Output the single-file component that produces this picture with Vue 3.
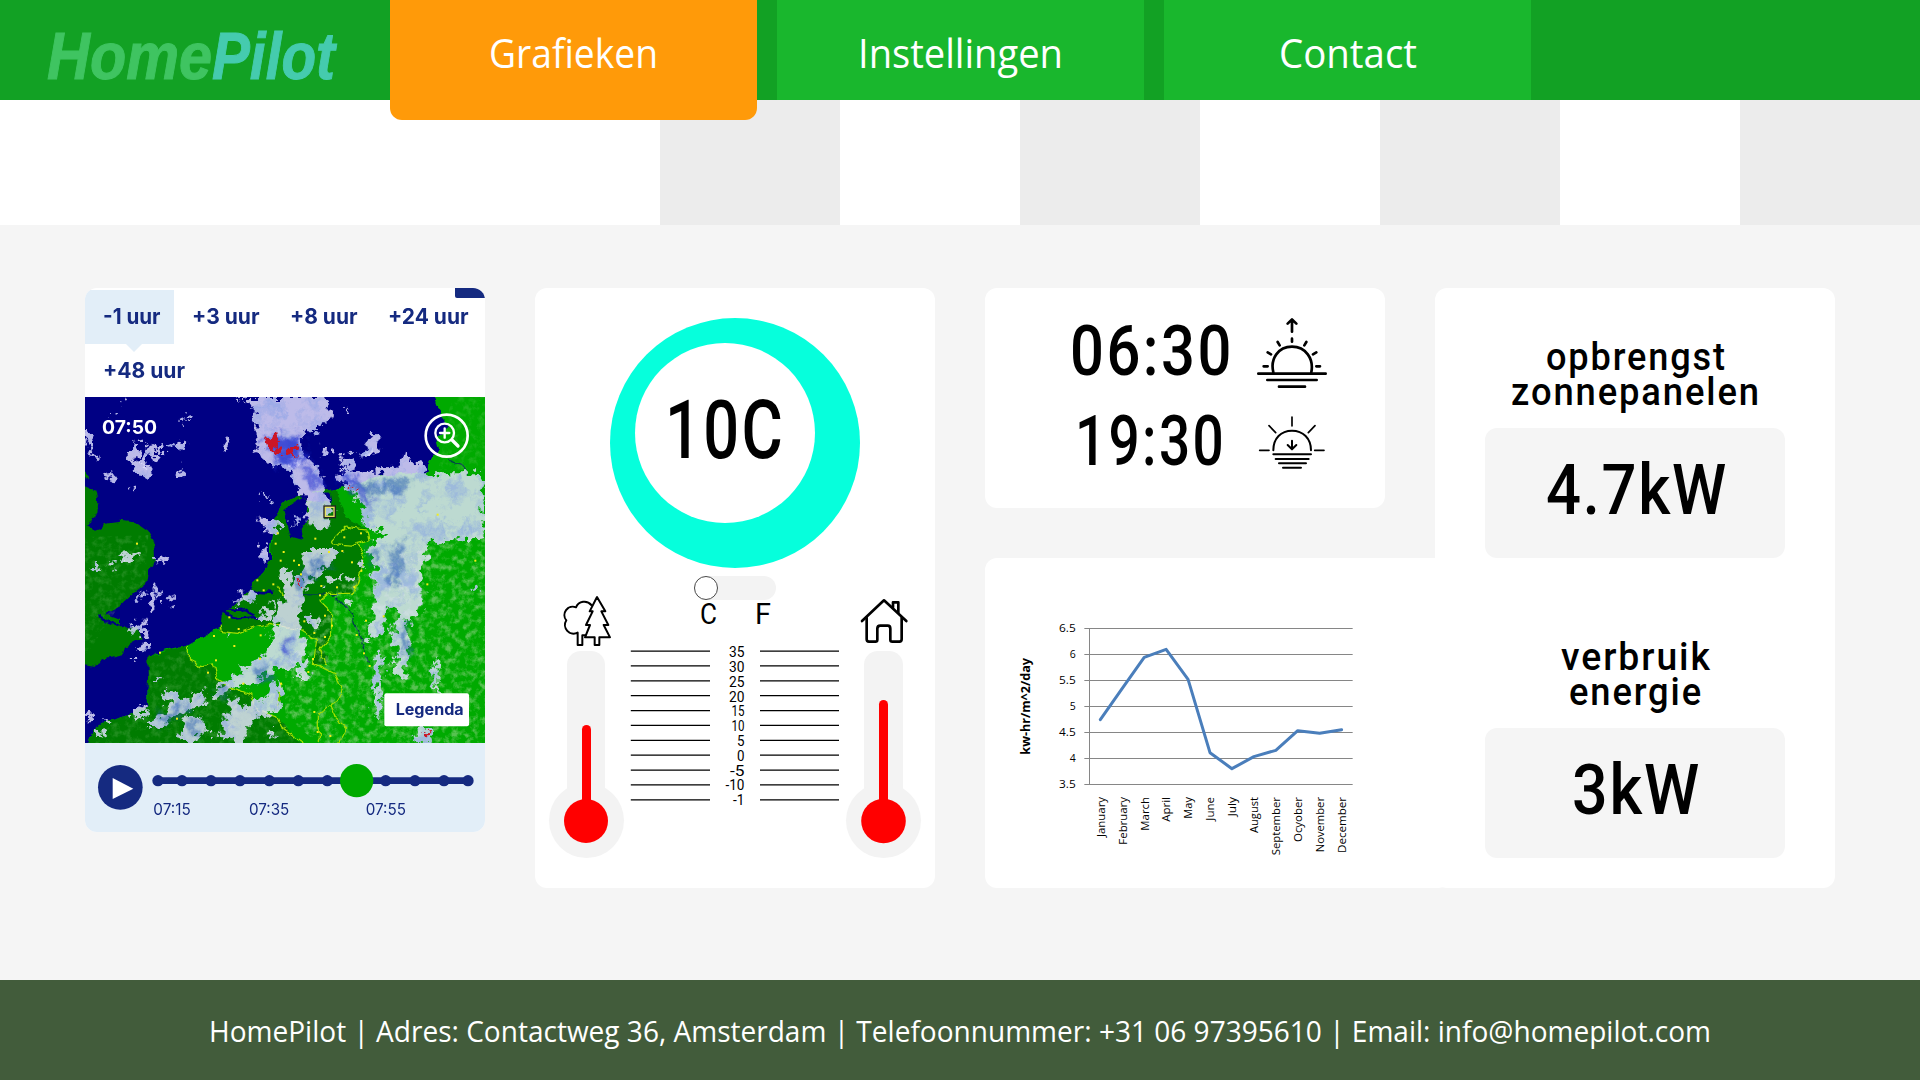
<script setup>
import { h } from 'vue'

// Single line of text drawn at an exact width
const FitText = (p) =>
  h('svg', { class: 'fit', width: p.w, height: p.h, viewBox: `0 0 ${p.w} ${p.h}` }, [
    h('text', { x: 0, y: p.base, 'font-size': p.size, textLength: p.w, lengthAdjust: 'spacingAndGlyphs' }, p.text),
  ])
FitText.props = ['text', 'w', 'h', 'base', 'size']

const tabs = [
  { text: 'Grafieken', w: 169, base: 68.2, active: true },
  { text: 'Instellingen', w: 205, base: 67.6 },
  { text: 'Contact', w: 138, base: 68.2 },
]

const ranges = [
  { text: '-1 uur', w: 57.5, cell: 89, active: true },
  { text: '+3 uur', w: 67.5, cell: 98 },
  { text: '+8 uur', w: 67.5, cell: 98 },
  { text: '+24 uur', w: 80.5, cell: 114 },
  { text: '+48 uur', w: 82, cell: 120 },
]

const energy = [
  { title: [{ t: 'opbrengst', w: 181 }, { t: 'zonnepanelen', w: 250 }], value: '4.7kW', w: 182 },
  { title: [{ t: 'verbruik', w: 151 }, { t: 'energie', w: 134 }], value: '3kW', w: 129 },
]

const scale = [
  ['35', 15.5], ['30', 15.5], ['25', 15.5], ['20', 15.5], ['15', 13], ['10', 13],
  ['5', 7.5], ['0', 7.5], ['-5', 14.5], ['-10', 19], ['-1', 11.5],
]

const months = [
  ['January', 120, 509], ['February', 143, 415], ['March', 101, 322], ['April', 74, 298],
  ['May', 65, 388], ['June', 71, 608], ['July', 58, 656], ['August', 108, 620],
  ['September', 175, 601], ['Ocyober', 135, 542], ['November', 166, 550], ['December', 168, 539],
]
const monthX = (i) => 361 + i * 65.8
const linePoints = months.map((m, i) => `${monthX(i)},${m[2]}`).join(' ')
const yLabels = [['6.5', 50], ['6', 18], ['5.5', 50], ['5', 18], ['4.5', 50], ['4', 18], ['3.5', 50]]

const stops = [264, 336, 423, 510, 598, 685, 772, 947, 1035, 1122, 1194]
const times = [['07:15', 250, 112], ['07:35', 537, 121], ['07:55', 887, 121]]

const showers = [
  [165, 215, 38, 20, 30], [148, 160, 14, 32, 20], [198, 162, 18, 22, 0], [178, 190, 12, 14, 20], [75, 238, 20, 8, 35],
  [228, 160, 8, 18, -20], [285, 145, 16, 14, -30], [262, 138, 5, 12, 40], [300, 60, 12, 6, -30], [292, 84, 4, 7, 20],
  [422, 140, 10, 24, 30], [286, 228, 12, 14, 20], [84, 54, 9, 7, 0], [10, 130, 10, 34, -15], [26, 172, 8, 8, 0],
  [144, 274, 7, 4, 20], [118, 4, 9, 5, 0], [775, 38, 9, 4, 30], [724, 164, 11, 14, 0], [785, 198, 24, 22, 20],
  [862, 150, 18, 42, 25], [840, 170, 24, 10, 20], [540, 300, 8, 5, 20], [560, 310, 6, 6, 0], [555, 382, 34, 20, 20],
  [535, 470, 14, 28, 0], [632, 366, 6, 9, 0], [135, 474, 18, 12, 0], [75, 505, 14, 7, 0], [30, 515, 16, 8, 0],
  [112, 482, 14, 6, 0], [235, 488, 10, 9, 20], [210, 484, 7, 9, 0], [205, 620, 10, 24, 5], [210, 590, 18, 10, 0],
  [258, 605, 12, 14, 0], [165, 595, 10, 7, 0], [160, 690, 28, 12, -30], [180, 705, 10, 16, 0], [178, 748, 18, 14, -20],
  [145, 792, 6, 6, 0], [12, 958, 18, 9, 0], [42, 1010, 14, 10, 0], [70, 976, 12, 5, 0], [165, 945, 34, 12, -30],
  [218, 842, 8, 4, -20], [685, 668, 20, 14, 40], [795, 616, 9, 8, 0], [825, 500, 12, 10, 0], [745, 548, 28, 8, -25],
  [800, 545, 10, 8, 0], [490, 598, 22, 16, 10], [465, 612, 20, 5, -10], [545, 655, 26, 12, 0], [562, 620, 6, 22, 0],
  [435, 715, 8, 6, -20], [360, 925, 10, 7, -30], [385, 1012, 8, 8, 0], [560, 1016, 12, 6, 30], [1052, 840, 8, 56, -3],
  [1015, 1015, 26, 26, 0], [1170, 577, 8, 8, 0],
]

const towns = [
  [156, 440], [578, 409], [572, 440], [596, 465], [691, 425], [778, 421], [828, 409], [732, 465], [772, 462], [801, 496],
  [829, 521], [648, 532], [565, 562], [536, 580], [517, 550], [587, 491], [627, 491], [705, 595], [709, 567], [756, 571],
  [808, 570], [720, 656], [658, 673], [741, 686], [688, 708], [720, 720], [433, 661], [461, 696], [387, 717], [448, 747],
  [527, 715], [525, 785], [393, 790], [369, 827], [225, 767], [475, 860], [276, 965], [670, 825], [684, 786], [588, 860],
  [843, 671], [815, 714], [896, 658], [837, 769], [854, 807], [1027, 562], [1171, 491], [688, 945], [698, 1005], [736, 1017],
  [1058, 353], [642, 504],
]
</script>

<template>
  <div class="page">
    <header class="topbar">
      <div class="logo">
        <svg width="300" height="100" viewBox="0 0 300 100">
          <text x="47" y="79" font-size="67" textLength="165" lengthAdjust="spacingAndGlyphs" fill="#3fc461" stroke="#3fc461">Home</text>
          <text x="212" y="79" font-size="67" textLength="123" lengthAdjust="spacingAndGlyphs" fill="#45cbae" stroke="#45cbae">Pilot</text>
        </svg>
      </div>
      <nav class="nav">
        <a v-for="t in tabs" :key="t.text" class="nav-tab" :class="{ active: t.active }">
          <FitText :text="t.text" :w="t.w" :h="100" :base="t.base" :size="39.5" />
        </a>
      </nav>
    </header>

    <div class="strip">
      <i v-for="n in 4" :key="n" class="block"></i>
    </div>

    <main class="board">
      <section class="card radar">
        <div class="ranges">
          <div v-for="r in ranges" :key="r.text" class="range" :class="{ on: r.active }" :style="{ width: r.cell + 'px' }">
            <FitText :text="r.text" :w="r.w" :h="53" :base="34.1" :size="21.5" />
          </div>
          <span class="corner"></span>
        </div>

        <svg class="map" width="400" height="346" viewBox="0 0 1200 1038" preserveAspectRatio="none">
          <defs>
            <filter id="coast" x="-5%" y="-5%" width="110%" height="110%">
              <feTurbulence type="fractalNoise" baseFrequency="0.03" numOctaves="3" seed="4" />
              <feDisplacementMap in="SourceGraphic" scale="22" xChannelSelector="R" yChannelSelector="G" />
            </filter>
            <filter id="ragged" x="-5%" y="-5%" width="110%" height="110%">
              <feTurbulence type="fractalNoise" baseFrequency="0.04" numOctaves="4" seed="9" />
              <feDisplacementMap in="SourceGraphic" scale="58" xChannelSelector="R" yChannelSelector="G" />
            </filter>
            <filter id="core" x="-5%" y="-5%" width="110%" height="110%">
              <feTurbulence type="fractalNoise" baseFrequency="0.03" numOctaves="4" seed="12" result="n" />
              <feGaussianBlur in="SourceGraphic" stdDeviation="9" result="b" />
              <feDisplacementMap in="b" in2="n" scale="70" xChannelSelector="R" yChannelSelector="G" />
            </filter>
            <filter id="mottle" x="0" y="0" width="100%" height="100%">
              <feTurbulence type="fractalNoise" baseFrequency="0.022 0.016" numOctaves="5" seed="21" />
              <feColorMatrix values="0 0 0 0 0.2  0 0 0 0 0.32  0 0 0 0 0.78  3.2 0 0 0 -1.45" result="m" />
              <feComposite in="m" in2="SourceGraphic" operator="in" />
            </filter>
            <filter id="relief" x="0" y="0" width="100%" height="100%">
              <feTurbulence type="fractalNoise" baseFrequency="0.05" numOctaves="5" seed="7" />
              <feColorMatrix values="0 0 0 0 0.42  0 0 0 0 0.7  0 0 0 0 0.36  0 3 0 0 -1.35" result="m" />
              <feComposite in="m" in2="SourceGraphic" operator="in" />
            </filter>
            <g id="clouds">
              <path d="M465 0 515 39 508 79 515 139 535 189 575 209 635 209 655 189 645 119 695 99 740 60 720 0Z" />
              <path d="M610 195 630 270 660 290 655 330 665 370 690 400 735 385 735 320 715 270 705 215 660 170Z" />
              <path d="M760 225 915 219 955 179 995 189 1025 229 1195 229 1195 419 1105 434 1035 434 1010 519 1015 609 995 659 965 669 975 759 955 839 915 839 940 749 915 729 930 699 940 629 905 639 890 719 845 729 865 609 870 519 850 459 895 409 835 389 835 319 775 269Z" />
              <path d="M870 769 897 779 887 859 892 955 868 949Z" />
              <path d="M655 459 765 459 735 509 675 549 655 609 635 679 660 749 665 849 642 849 642 809 575 814 515 859 445 869 405 903 370 889 435 849 485 809 515 789 555 749 565 679 595 609 592 519 615 509 625 559 655 539Z" />
              <path d="M185 989 255 929 230 889 265 880 295 909 355 884 358 922 285 952 215 990Z" />
              <path d="M300 959 345 956 364 1004 330 1038 280 1038Z" />
              <path d="M440 899 475 929 545 899 575 849 587 889 580 939 515 959 475 1029 410 1022 420 959Z" />
              <ellipse v-for="(s, i) in showers" :key="i" :cx="s[0]" :cy="s[1]" :rx="s[2]" :ry="s[3]" :transform="`rotate(${s[4]} ${s[0]} ${s[1]})`" />
            </g>
          </defs>
          <rect width="1200" height="1038" fill="#000084" />
          <g filter="url(#coast)">
            <path fill="#007b04" d="M-20 200 15 240-20 235ZM-20 262 30 284 42 319 40 354 15 374 5 387 30 401 50 394 60 377 105 371 150 376 190 404 208 434 210 489 195 519 190 554 150 585 105 628 60 652 105 668 105 694 155 694 170 721 120 749 115 771 70 781 30 804-20 797Z" />
            <path fill="#00aa05" d="M1040-20 1060 30 1070 60 1095 90 1055 120 1065 160 1030 190 1028 225 900 235 755 275 655 292 605 310 580 335 565 390 555 449 555 489 515 549 475 600 410 655 440 682 385 699 305 744 225 764 192 779 187 899 190 919 135 954 65 974 25 999 0 1060 1220 1060 1220-20Z" />
            <path fill="#007b04" d="M755 275 655 292 605 310 580 335 565 390 555 489 515 549 475 600 410 655 405 704 455 709 555 679 645 699 695 729 685 799 725 804 730 779 705 759 740 719 735 689 740 649 705 614 735 589 805 589 815 559 840 479 810 439 855 429 850 399 780 360 760 300ZM187 779 305 744 310 789 350 809 385 804 395 844 435 869 500 894 515 939 575 959 660 1060 0 1060 25 999 65 974 135 954 190 919Z" />
            <path fill="#000084" d="M595 339 655 299 675 359 650 399 655 429 620 419 605 379ZM640 300 660 285 735 290 740 320 700 315ZM1000 20 1030 10 1045 40 1020 60Z" />
            <path d="M410 640 470 635 515 660 450 665ZM470 570 520 585 570 588M90 655 190 600M40 660 105 690" fill="none" stroke="#000084" stroke-width="7" />
            <path d="M640 590 760 592M1090 190 1130 205 1150 232M750 600 800 650 830 720 850 800" fill="none" stroke="#02404a" stroke-width="4" />
          </g>
          <g filter="url(#relief)" opacity=".5">
            <path d="M600 800 740 640 760 560 1010 440 1200 400V1038H700L600 960Z" />
          </g>
          <g filter="url(#relief)" opacity=".18">
            <path d="M192 790 305 760 395 844 575 959 660 1038H30L75 984 195 925ZM0 420 190 414 180 554 100 630 0 780ZM1100 0H1200V220H1060Z" />
          </g>
          <g fill="none" stroke="#a4e000" stroke-width="3.5" filter="url(#coast)">
            <path d="M310 744 310 789 350 809 385 804 395 844 435 869 500 894 515 939 575 959 590 990 655 1038M405 689 410 704 455 709 510 690 555 679 645 699 695 729 685 799 750 830 770 870 765 900 735 920 700 950 700 1038M735 915 750 960 785 990 760 1038M725 804 705 759 740 719 740 649 705 614 735 589 805 589 820 540 840 479 810 439 855 429 850 400 780 390 740 430 745 440 810 445M580 559 600 600M585 860 580 940" />
          </g>
          <use href="#clouds" fill="#e6e4ff" fill-opacity=".82" filter="url(#ragged)" />
          <g filter="url(#ragged)"><use href="#clouds" filter="url(#mottle)" opacity=".5" /></g>
          <g filter="url(#core)" fill="none" stroke="#2232cf" stroke-linecap="round" opacity=".8">
            <path stroke-width="46" d="M560 135 625 140M590 185 640 175" />
            <path stroke-width="20" d="M665 215 700 265M785 240 815 275 850 310" />
            <path stroke-width="17" stroke="#2156ad" d="M830 270 960 268M940 445 925 560M955 690 960 760M865 460V490M720 490 660 540 635 570M555 815 520 850M400 885H410M330 970 325 1000M225 975 290 930" />
            <path stroke-width="20" d="M600 735V770" />
          </g>
          <g fill="#cb1526" filter="url(#ragged)">
            <path d="M542 130 570 105 588 130 573 145 588 172 555 164Z" />
            <path d="M622 150 637 145 627 172 637 185 615 177Z" />
            <circle cx="650" cy="562" r="4" /><circle cx="806" cy="276" r="5" /><circle cx="1025" cy="1010" r="5" />
          </g>
          <g fill="#f3ee18">
            <rect v-for="(t, i) in towns" :key="i" :x="t[0] - 3" :y="t[1] - 3" width="6" height="6" />
          </g>
          <rect x="719" y="329" width="30" height="31" fill="none" stroke="#222" stroke-width="8" />
          <rect x="721" y="331" width="26" height="27" fill="none" stroke="#e6e264" stroke-width="4" />
          <text x="51" y="111" class="clock" font-size="57" textLength="165" lengthAdjust="spacingAndGlyphs">07:50</text>
          <g fill="none" stroke="#fff" stroke-linecap="round">
            <circle cx="1085" cy="116" r="63" stroke-width="8" />
            <circle cx="1079" cy="108" r="28" stroke-width="7" />
            <path d="M1079 94V122M1065 108H1093" stroke-width="7" />
            <path d="M1101 129 1119 147" stroke-width="10" />
          </g>
          <rect x="898" y="889" width="254" height="99" rx="6" fill="#fff" />
          <text x="932" y="954" class="navy bold" font-size="46" textLength="204" lengthAdjust="spacingAndGlyphs">Legenda</text>
        </svg>

        <svg class="timeline" width="400" height="89" viewBox="45 580 1200 267">
          <circle cx="151" cy="713" r="67" fill="#152a80" />
          <path d="M128 685 190 717 128 748Z" fill="#fff" />
          <path d="M264 693H1194" stroke="#152a80" stroke-width="20" />
          <circle v-for="s in stops" :key="s" :cx="s" cy="693" r="17" fill="#152a80" />
          <circle cx="860" cy="693" r="50" fill="#00aa00" />
          <text v-for="t in times" :key="t[0]" :x="t[1]" y="795" class="navy" font-size="48" :textLength="t[2]" lengthAdjust="spacingAndGlyphs">{{ t[0] }}</text>
        </svg>
      </section>

      <section class="card climate">
        <svg class="din" width="400" height="600" viewBox="535 288 400 600">
          <circle cx="735" cy="443" r="125" fill="#06ffdc" />
          <circle cx="725" cy="433" r="90" fill="#fff" />
          <text x="665" y="457.5" font-size="81" textLength="120" lengthAdjust="spacingAndGlyphs" class="medium" letter-spacing="3">10C</text>

          <rect x="694" y="576" width="82" height="24" rx="12" fill="#f3f3f3" />
          <circle cx="706" cy="588" r="11.5" fill="#fff" stroke="#4a4a4a" stroke-width="1" />
          <text x="700" y="623.7" font-size="29" textLength="17" lengthAdjust="spacingAndGlyphs">C</text>
          <text x="755" y="623.7" font-size="29" textLength="16" lengthAdjust="spacingAndGlyphs">F</text>

          <g fill="#f3f3f3">
            <rect x="567" y="651" width="38" height="170" rx="14" />
            <circle cx="586.5" cy="820.5" r="37.5" />
            <rect x="864" y="651" width="39" height="170" rx="14" />
            <circle cx="883.5" cy="820.5" r="37.5" />
          </g>
          <g fill="#f00">
            <rect x="582" y="725" width="9" height="90" rx="4.5" />
            <circle cx="586" cy="821" r="22" />
            <rect x="879" y="700" width="9" height="115" rx="4.5" />
            <circle cx="883.5" cy="821" r="22.3" />
          </g>

          <template v-for="(s, i) in scale" :key="s[0]">
            <path :d="`M630.8 ${651.1 + i * 14.87}H710M760 ${651.1 + i * 14.87}H839`" stroke="#000" stroke-width="1.3" />
            <text :x="744.5 - s[1]" :y="657.2 + i * 14.8" font-size="15.5" :textLength="s[1]" lengthAdjust="spacingAndGlyphs">{{ s[0] }}</text>
          </template>

          <g transform="translate(530 560) scale(.33333)" fill="none" stroke="#000" stroke-linejoin="round" stroke-linecap="round">
            <g stroke-width="6">
              <path d="M201 111 179 154H188L168 195H180L165 232H194V255H208V232H240L221 195H235L214 154H226Z" />
              <path d="M184 135A27 27 0 0 0 138 142A25 25 0 0 0 109 181A26 26 0 0 0 143 218V255H157V226H166" />
            </g>
            <g stroke-width="8">
              <path d="M996 183 1062 121 1129 183" />
              <path d="M1010 173V238Q1010 245 1017 245H1036Q1042 245 1042 239V206Q1042 197 1051 197H1073Q1081 197 1081 206V239Q1081 245 1087 245H1108Q1115 245 1115 238V173" />
              <path d="M1089 142V127H1105V158" />
            </g>
          </g>
        </svg>
      </section>

      <section class="card sun">
        <svg class="din medium" width="400" height="220" viewBox="985 288 400 220">
          <text x="1070" y="374.5" font-size="71" textLength="164" lengthAdjust="spacingAndGlyphs" letter-spacing="3">06:30</text>
          <text x="1075" y="464.5" font-size="71" textLength="151" lengthAdjust="spacingAndGlyphs" letter-spacing="3">19:30</text>
          <g transform="translate(980 280) scale(.33333)" fill="none" stroke="#000" stroke-linecap="round" stroke-linejoin="round">
            <g stroke-width="8">
              <path d="M936 155V119M923 131 936 118 949 131M936 176V185M893 186 899 196M979 186 973 196M863 217 873 223M1009 217 999 223M851 259H863M1009 259H1020" />
              <path d="M880 277C870 236 895 200 936 200S1002 236 994 277" />
              <path d="M835 281H1037M862 300H1010M897 320H975" />
            </g>
            <g stroke-width="6">
              <path d="M936 411V438M867 437 887 458M1005 437 985 458M839 511H867M1004 511H1032" stroke-width="5" />
              <path d="M880 511C880 475 903 452 936 452S993 475 993 511" />
              <path d="M936 482V506M923 495 936 508 949 495" />
              <path d="M880 523H993M887 537H986M897 550H978M909 563H963" />
            </g>
          </g>
        </svg>
      </section>

      <section class="card solar">
        <svg class="chart" width="450" height="330" viewBox="15 24 1350 990">
          <path d="M313 235.500H1118M313 313.500H1118M313 391.500H1118M313 469.500H1118M313 547.500H1118M313 625.500H1118M313 703.500H1118M328.500 235.500V703.500" stroke="#868686" stroke-width="3" />
          <text v-for="(l, i) in yLabels" :key="l[0]" :x="287 - l[1]" :y="246 + i * 78" font-size="33" :textLength="l[1]" lengthAdjust="spacingAndGlyphs">{{ l[0] }}</text>
          <polyline :points="linePoints" fill="none" stroke="#4a7ebb" stroke-width="9" stroke-linejoin="round" stroke-linecap="round" />
          <text
            v-for="(m, i) in months"
            :key="m[0]"
            :transform="`translate(${monthX(i) + 13} ${741 + m[1]}) rotate(-90)`"
            font-size="33"
            :textLength="m[1]"
            lengthAdjust="spacingAndGlyphs"
          >{{ m[0] }}</text>
          <text transform="translate(150 614) rotate(-90)" font-size="38" font-weight="700" textLength="290" lengthAdjust="spacingAndGlyphs">kw-hr/m^2/day</text>
        </svg>
      </section>

      <section class="card energy">
        <div v-for="e in energy" :key="e.value" class="meter">
          <div class="title">
            <FitText v-for="l in e.title" :key="l.t" :text="l.t" :w="l.w" :h="35" :base="29.8" :size="38.5" />
          </div>
          <div class="value">
            <FitText :text="e.value" :w="e.w" :h="130" :base="86" :size="71" />
          </div>
        </div>
      </section>
    </main>

    <footer class="footer">
      <FitText text="HomePilot | Adres: Contactweg 36, Amsterdam | Telefoonnummer: +31 06 97395610 | Email: info@homepilot.com" :w="1502" :h="100" :base="61.9" :size="30" />
    </footer>
  </div>
</template>

<style>
body {
  margin: 0;
}
.fit {
  display: block;
  flex: none;
  overflow: visible;
}
.fit text {
  fill: inherit;
}
</style>

<style scoped>
.page {
  width: 1920px;
  height: 1080px;
  overflow: hidden;
  display: flex;
  flex-direction: column;
  background: #f5f5f5;
}
svg {
  display: block;
}
.topbar {
  height: 100px;
  flex: none;
  display: flex;
  background: #12a124;
  position: relative;
  z-index: 1;
}
.logo {
  width: 390px;
}
.logo svg {
  overflow: visible;
  font-family: "Liberation Sans", Arial, sans-serif;
  font-weight: 700;
  font-style: italic;
}
.nav {
  display: flex;
  gap: 20px;
  font-family: "Open Sans", "Segoe UI", sans-serif;
  fill: #fff;
}
.nav-tab {
  width: 367px;
  height: 100px;
  display: flex;
  justify-content: center;
  background: #19b72d;
}
.nav-tab.active {
  height: 120px;
  background: #ff9a09;
  border-radius: 0 0 12px 12px;
}
.strip {
  height: 125px;
  flex: none;
  display: flex;
  justify-content: flex-end;
  gap: 180px;
  background: #fff;
}
.block {
  width: 180px;
  background: #ececec;
}
.board {
  flex: 1;
  padding: 63px 85px 0;
  display: grid;
  grid-template-columns: repeat(4, 400px);
  grid-template-rows: 220px 330px;
  gap: 50px;
  align-items: start;
}
.card {
  background: #fff;
  border-radius: 12px;
}
.radar {
  grid-row: 1 / 3;
  overflow: hidden;
  height: 544px;
}
.climate {
  grid-row: 1 / 3;
  grid-column: 2;
}
.sun {
  grid-column: 3;
}
.solar {
  grid-column: 3;
  grid-row: 2;
  width: 465px;
}
.energy {
  grid-column: 4;
  grid-row: 1 / 3;
  height: 600px;
}
.ranges {
  position: relative;
  box-sizing: border-box;
  height: 109px;
  padding-top: 2px;
  display: flex;
  flex-wrap: wrap;
  align-content: flex-start;
  font-family: Inter, sans-serif;
  font-weight: 700;
  fill: #152a80;
}
.range {
  height: 53.5px;
  box-sizing: border-box;
  padding-left: 17.5px;
  position: relative;
}
.range.on {
  background: #e2eef8;
}
.range.on::after {
  content: "";
  position: absolute;
  left: 40px;
  top: 53px;
  border: 9px solid transparent;
  border-top-color: #e2eef8;
}
.corner {
  position: absolute;
  right: 0;
  top: 0;
  width: 30px;
  height: 10px;
  background: #152a80;
  border-bottom-left-radius: 2px;
}
.map,
.timeline {
  font-family: Inter, sans-serif;
}
.timeline {
  background: #e2eef8;
}
.navy {
  fill: #152a80;
}
.bold {
  font-weight: 700;
}
.clock {
  font-weight: 700;
  fill: #fff;
}
.din {
  font-family: Roboto, sans-serif;
}
.medium {
  font-weight: 500;
}
.chart {
  font-family: "Open Sans", sans-serif;
}
.meter {
  display: flex;
  flex-direction: column;
  align-items: center;
  padding-top: 52.4px;
  height: 247.6px;
  font-family: Roboto, sans-serif;
  font-weight: 500;
}
.title {
  height: 87.6px;
  display: flex;
  flex-direction: column;
  align-items: center;
  letter-spacing: 2px;
  padding-left: 2px;
}
.value {
  width: 300px;
  height: 130px;
  border-radius: 12px;
  background: #f5f5f5;
  display: flex;
  justify-content: center;
  letter-spacing: 2px;
}
.value .fit {
  margin-left: 3px;
}
.footer {
  height: 100px;
  flex: none;
  display: flex;
  justify-content: center;
  background: #425c3b;
  font-family: "Open Sans", "Segoe UI", sans-serif;
  fill: #fff;
}
</style>
